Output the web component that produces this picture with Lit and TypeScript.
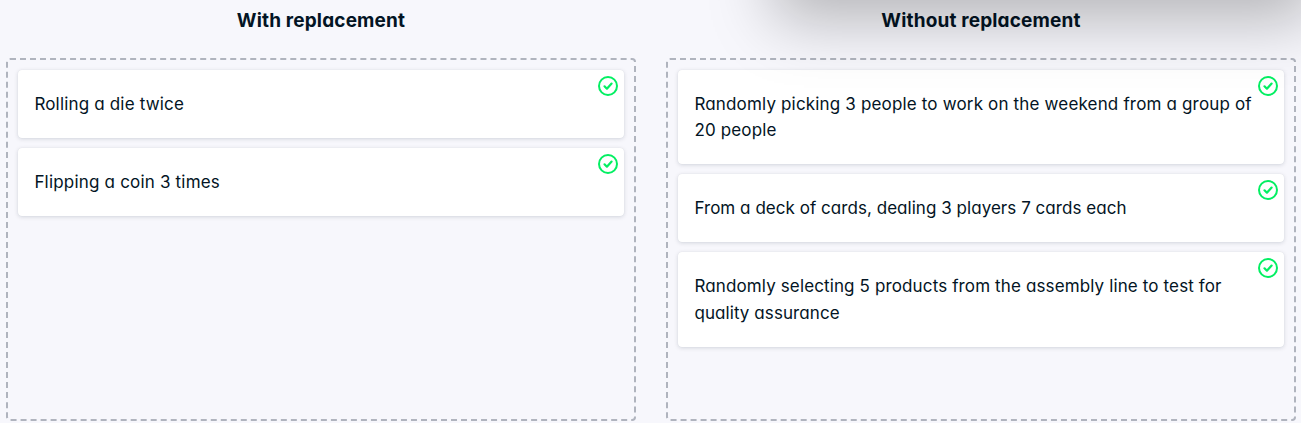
import { LitElement, html, css } from "lit";
import { customElement, property } from "lit/decorators.js";

interface Item {
  lines: { text: string; spacing: number }[];
}

const WITH: Item[] = [
  { lines: [{ text: "Rolling a die twice", spacing: 0.17 }] },
  { lines: [{ text: "Flipping a coin 3 times", spacing: 0.19 }] },
];

const WITHOUT: Item[] = [
  {
    lines: [
      { text: "Randomly picking 3 people to work on the weekend from a group of", spacing: 0.165 },
      { text: "20 people", spacing: 0.15 },
    ],
  },
  { lines: [{ text: "From a deck of cards, dealing 3 players 7 cards each", spacing: 0.04 }] },
  {
    lines: [
      { text: "Randomly selecting 5 products from the assembly line to test for", spacing: 0.13 },
      { text: "quality assurance", spacing: 0.08 },
    ],
  },
];

@customElement("drop-card")
class DropCard extends LitElement {
  @property({ attribute: false }) item!: Item;

  static styles = css`
    :host {
      display: block;
      position: relative;
      box-sizing: border-box;
      padding: 20.8px 16.4px;
      background: #fff;
      border-radius: 4px;
      box-shadow: 0 0 1px rgba(5, 25, 45, 0.1), 0 1px 4px rgba(5, 25, 45, 0.15);
    }
    .line {
      display: block;
      width: max-content;
      white-space: nowrap;
      line-height: 26.4px;
    }
    .check {
      position: absolute;
      top: 6px;
      right: 6px;
      display: block;
    }
  `;

  render() {
    return html`
      ${this.item.lines.map(
        (l) => html`<span class="line" style="letter-spacing:${l.spacing}px">${l.text}</span>`
      )}
      <svg class="check" width="20" height="20" viewBox="0 0 20 20" fill="none" stroke="#03ef62">
        <circle cx="10" cy="10" r="9" stroke-width="2" />
        <path d="M6.5 10.3 8.9 12.7 13.6 7.6" stroke-width="2.2" stroke-linecap="round" stroke-linejoin="round" />
      </svg>
    `;
  }
}

@customElement("app-root")
class AppRoot extends LitElement {
  static styles = css`
    :host {
      display: block;
      position: relative;
      box-sizing: border-box;
      width: 1301px;
      height: 423px;
      overflow: hidden;
      padding: 0 5px 0 6px;
      background: #f7f7fc;
      color: #031424;
      font: 400 17px Inter, "Noto Sans", sans-serif;
      font-feature-settings: "cv11";
    }
    .columns {
      display: grid;
      grid-template-columns: 630px 630px;
      column-gap: 30px;
    }
    .heading {
      margin: 0;
      height: 58px;
      line-height: 41px;
      text-align: center;
      font-size: 19px;
      font-weight: 650;
      letter-spacing: 0.16px;
    }
    .zone {
      box-sizing: border-box;
      height: 363px;
      padding: 10px;
      border: 2px dashed #b0b4be;
      border-radius: 4px;
      display: flex;
      flex-direction: column;
      gap: 10px;
    }
    .shade {
      position: absolute;
      left: 774px;
      top: -200px;
      width: 541px;
      height: 200px;
      box-shadow: 0 20px 60px rgba(0, 0, 0, 0.27);
      pointer-events: none;
      z-index: 1;
    }
  `;

  private column(title: string, items: Item[]) {
    return html`
      <section>
        <h2 class="heading">${title}</h2>
        <div class="zone">${items.map((i) => html`<drop-card .item=${i}></drop-card>`)}</div>
      </section>
    `;
  }

  render() {
    return html`
      <div class="shade"></div>
      <div class="columns">
        ${this.column("With replacement", WITH)} ${this.column("Without replacement", WITHOUT)}
      </div>
    `;
  }
}
